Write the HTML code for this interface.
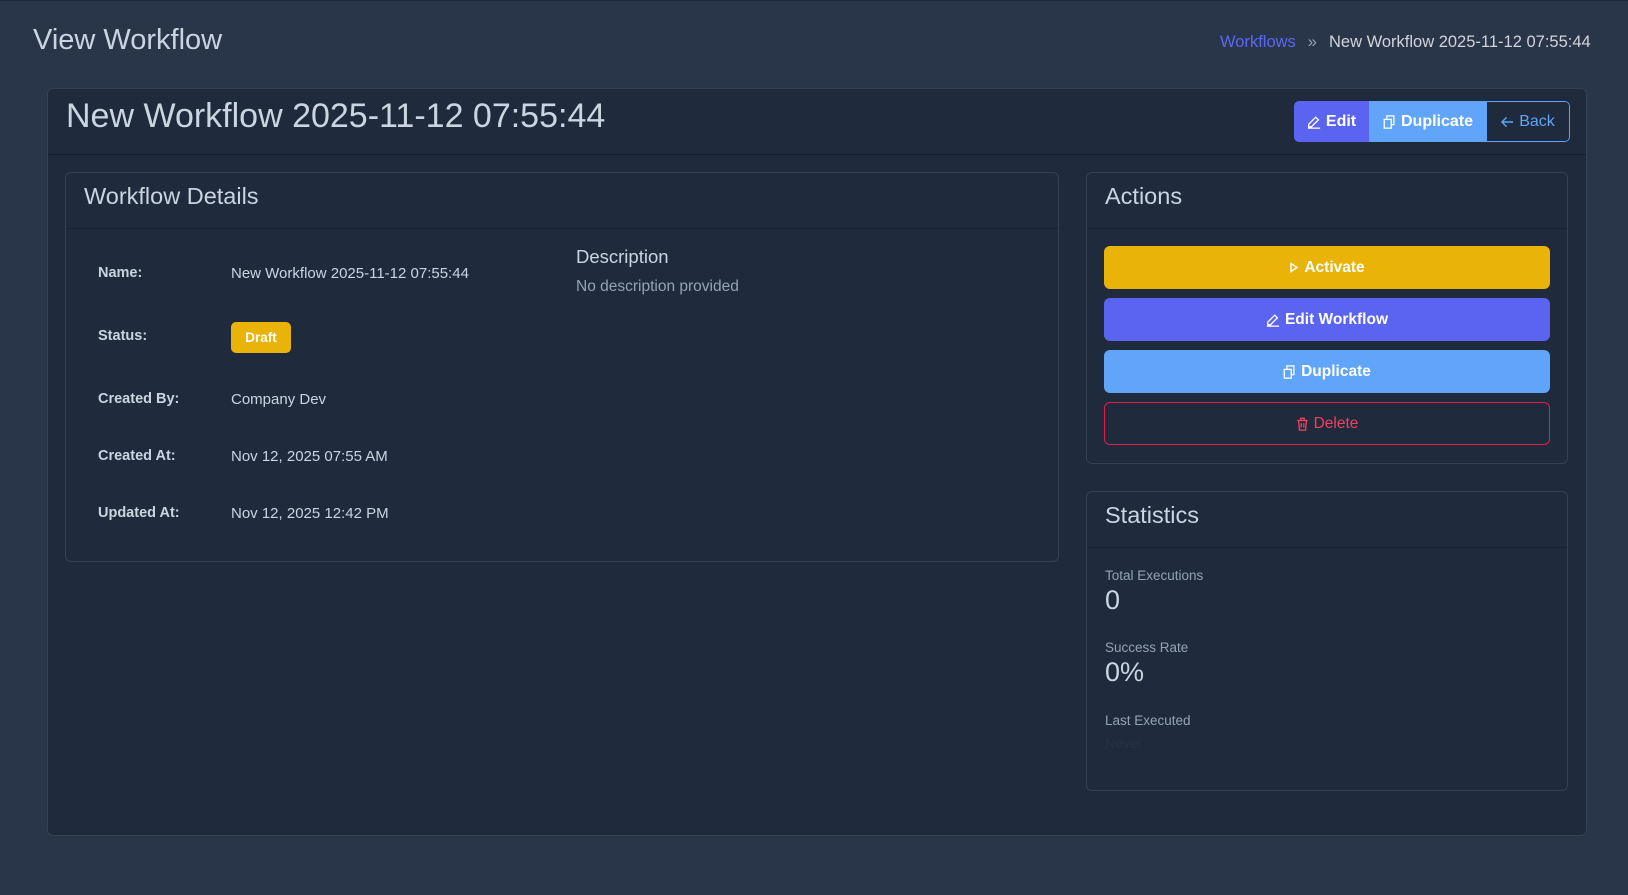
<!DOCTYPE html>
<html><head><meta charset="utf-8">
<style>
*{box-sizing:border-box;margin:0;padding:0}
body{width:1628px;height:895px;background:#293548;font-family:"Liberation Sans",sans-serif;color:#cbd5e1;position:relative;overflow:hidden;border-top:1px solid #1e293b}
.abs{position:absolute}
.card{position:absolute;background:#1f2a3c;border:1px solid #334155;border-radius:6px}
.hdiv{position:absolute;left:0;right:0;height:1px;background:#18212f}
.lbl{position:absolute;left:32px;font-size:14.5px;font-weight:bold;color:#cbd5e1}
.val{position:absolute;left:165px;font-size:15px;color:#cbd5e1}
.abtn{position:absolute;left:17px;width:446px;height:43px;border-radius:6px;display:flex;align-items:center;justify-content:center;font-size:15.5px;font-weight:bold;color:#fff;gap:5px}
svg{display:inline-block}
</style></head><body>
<div class="abs" style="left:33px;top:23px;font-size:29px;color:#cbd5e1">View Workflow</div>
<div class="abs" style="left:1220px;top:32px;font-size:16.5px;white-space:nowrap"><span style="color:#5b67f0">Workflows</span><span style="color:#94a3b8;margin:0 12px">»</span><span style="color:#d1d5db">New Workflow 2025-11-12 07:55:44</span></div>

<div class="card" style="left:47px;top:87px;width:1540px;height:748px;">
  <div class="abs" style="left:18px;top:8px;font-size:34px;color:#cbd5e1">New Workflow 2025-11-12 07:55:44</div>
  <div class="hdiv" style="top:65px"></div>
  <div class="abs" style="left:1246px;top:12px;width:276px;height:41px;border-radius:5px;overflow:hidden;display:flex;font-size:16px;font-weight:bold">
    <div style="width:75px;background:#5b64f0;color:#fff;display:flex;align-items:center;justify-content:center;gap:5px"><svg width="14" height="14" viewBox="0 0 16 16" fill="none" stroke="#fff" stroke-width="1.5"><path d="M10 2.5l3 3L5 13.5H2v-3z"/><path d="M1 15h14"/></svg>Edit</div>
    <div style="width:118px;background:#60a5fa;color:#fff;display:flex;align-items:center;justify-content:center;gap:5px"><svg width="13" height="14" viewBox="0 0 14 16" fill="none" stroke="#fff" stroke-width="1.5"><rect x="1" y="5" width="8" height="10"/><path d="M4 5V1h8v10H9"/></svg>Duplicate</div>
    <div style="flex:1;border:1px solid #60a5fa;border-left:none;border-radius:0 5px 5px 0;color:#60a5fa;font-weight:normal;display:flex;align-items:center;justify-content:center;gap:5px"><svg width="13" height="12" viewBox="0 0 14 12" fill="none" stroke="#60a5fa" stroke-width="1.5"><path d="M13 6H1M6 1L1 6l5 5"/></svg>Back</div>
  </div>
</div>

<div class="card" style="left:65px;top:171px;width:994px;height:390px;">
  <div class="abs" style="left:18px;top:10px;font-size:23.5px;color:#cbd5e1">Workflow Details</div>
  <div class="hdiv" style="top:55px"></div>
  <div class="lbl" style="top:92px">Name:</div><div class="val" style="top:92px">New Workflow 2025-11-12 07:55:44</div>
  <div class="lbl" style="top:155px">Status:</div>
  <div class="abs" style="left:165px;top:149px;width:60px;height:31px;background:#eab308;border-radius:5px;color:#fff;font-size:13.5px;font-weight:bold;display:flex;align-items:center;justify-content:center">Draft</div>
  <div class="lbl" style="top:218px">Created By:</div><div class="val" style="top:218px">Company Dev</div>
  <div class="lbl" style="top:275px">Created At:</div><div class="val" style="top:275px">Nov 12, 2025 07:55 AM</div>
  <div class="lbl" style="top:332px">Updated At:</div><div class="val" style="top:332px">Nov 12, 2025 12:42 PM</div>
  <div class="abs" style="left:510px;top:73px;font-size:18.5px;color:#cbd5e1">Description</div>
  <div class="abs" style="left:510px;top:105px;font-size:15.5px;color:#94a3b8">No description provided</div>
</div>

<div class="card" style="left:1086px;top:171px;width:482px;height:292px;">
  <div class="abs" style="left:18px;top:10px;font-size:23.5px;color:#cbd5e1">Actions</div>
  <div class="hdiv" style="top:55px"></div>
  <div class="abtn" style="top:73px;background:#eab308"><svg width="10" height="11" viewBox="0 0 10 11" fill="none" stroke="#fff" stroke-width="1.5"><path d="M2 1.5l6 4-6 4z"/></svg> Activate</div>
  <div class="abtn" style="top:125px;background:#5b64f0"><svg width="14" height="14" viewBox="0 0 16 16" fill="none" stroke="#fff" stroke-width="1.5"><path d="M10 2.5l3 3L5 13.5H2v-3z"/><path d="M1 15h14"/></svg>Edit Workflow</div>
  <div class="abtn" style="top:177px;background:#60a5fa"><svg width="13" height="14" viewBox="0 0 14 16" fill="none" stroke="#fff" stroke-width="1.5"><rect x="1" y="5" width="8" height="10"/><path d="M4 5V1h8v10H9"/></svg>Duplicate</div>
  <div class="abtn" style="top:229px;border:1px solid #e11d48;color:#f43f5e;font-weight:normal"><svg width="13" height="14" viewBox="0 0 14 16" fill="none" stroke="#f43f5e" stroke-width="1.5"><path d="M1 4h12M5 4V1.5h4V4M2.5 4l1 11h7l1-11M5.5 7v5M8.5 7v5"/></svg>Delete</div>
</div>

<div class="card" style="left:1086px;top:490px;width:482px;height:300px;">
  <div class="abs" style="left:18px;top:10px;font-size:23.5px;color:#cbd5e1">Statistics</div>
  <div class="hdiv" style="top:55px"></div>
  <div class="abs" style="left:18px;top:76px;font-size:13.5px;color:#94a3b8">Total Executions</div>
  <div class="abs" style="left:18px;top:93px;font-size:27px;color:#cbd5e1">0</div>
  <div class="abs" style="left:18px;top:148px;font-size:13.5px;color:#94a3b8">Success Rate</div>
  <div class="abs" style="left:18px;top:165px;font-size:27px;color:#cbd5e1">0%</div>
  <div class="abs" style="left:18px;top:221px;font-size:13.5px;color:#94a3b8">Last Executed</div>
  <div class="abs" style="left:18px;top:243px;font-size:14px;color:#273244">Never</div>
</div>
</body></html>
